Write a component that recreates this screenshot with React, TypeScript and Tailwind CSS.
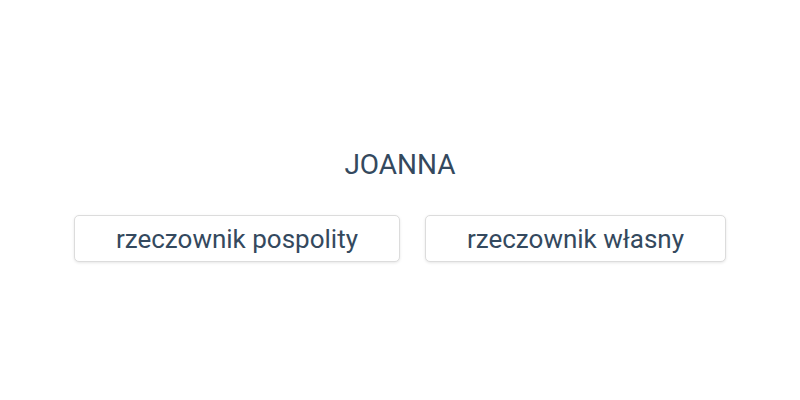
export default function App() {
  return (
    <div
      className="w-[800px] h-[400px] bg-white flex flex-col items-center justify-center text-[#34495e] pt-[11px]"
      style={{ fontFamily: "Roboto, 'Noto Sans', sans-serif" }}
    >
      <div className="text-[28px] leading-[32px]">JOANNA</div>
      <div className="flex gap-[25px] mt-[34px]">
        <button className="h-[47px] px-[41px] text-[26px] leading-[30px] bg-white border border-[#dcdcdc] rounded-[5px] shadow-[0_1px_3px_rgba(0,0,0,0.1)] text-[#34495e]">
          rzeczownik pospolity
        </button>
        <button className="h-[47px] px-[41px] text-[26px] leading-[30px] bg-white border border-[#dcdcdc] rounded-[5px] shadow-[0_1px_3px_rgba(0,0,0,0.1)] text-[#34495e]">
          rzeczownik własny
        </button>
      </div>
    </div>
  );
}
